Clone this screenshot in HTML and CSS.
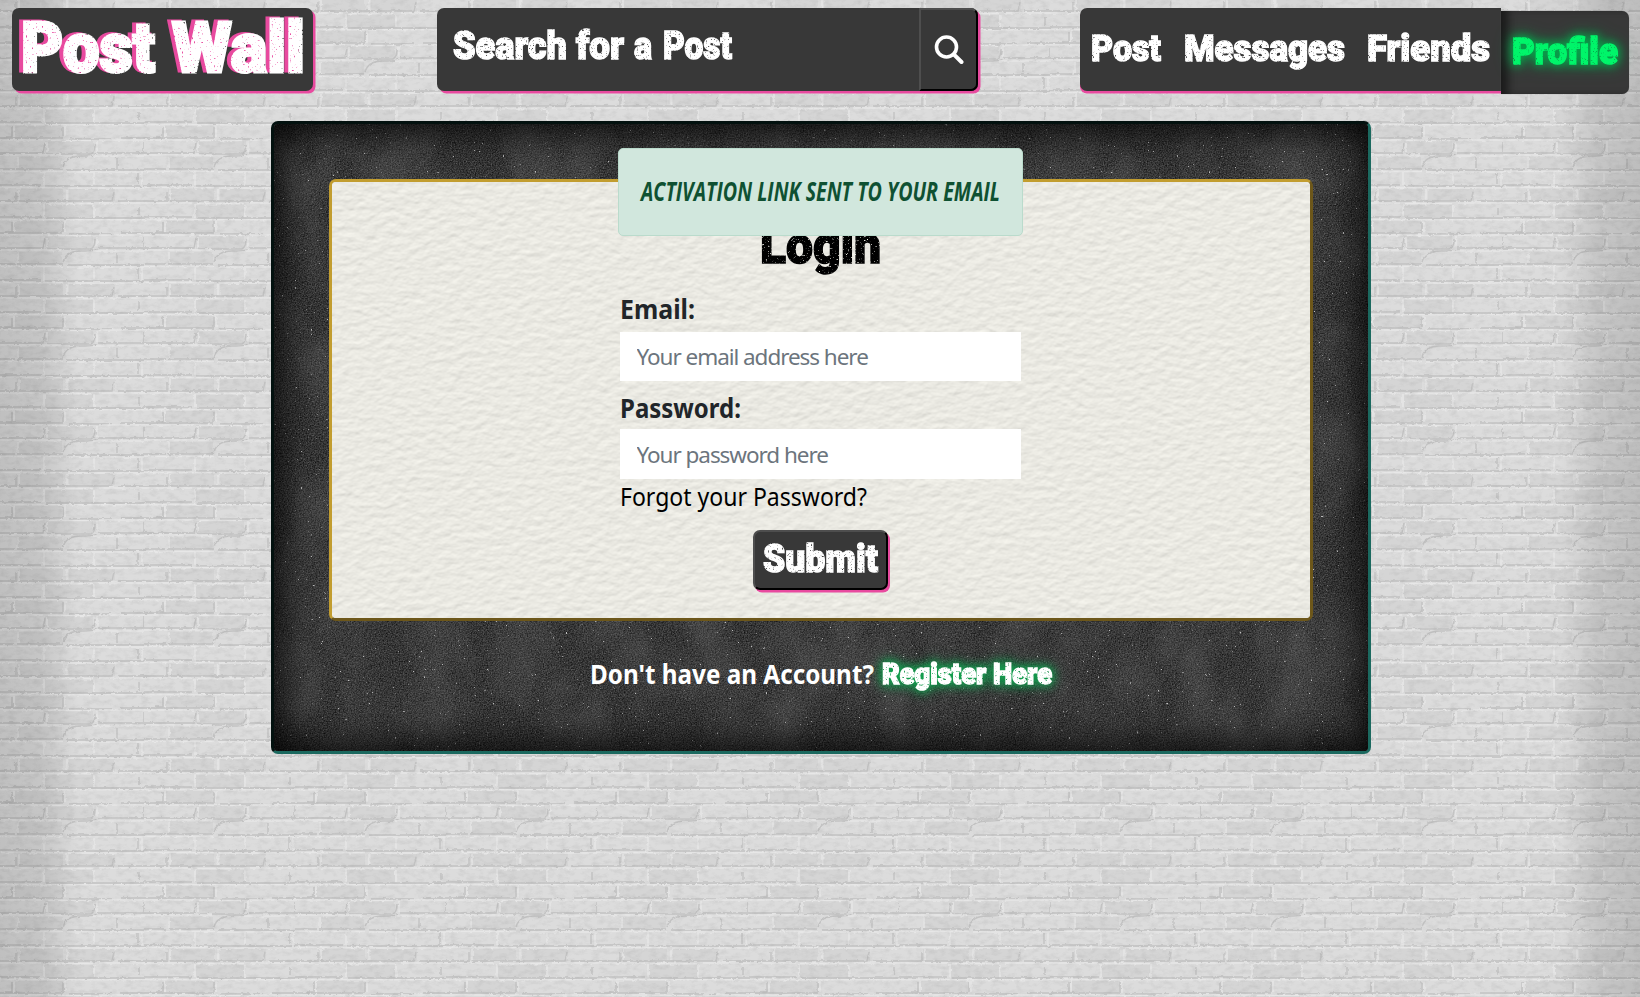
FILE: index.html
```html
<!DOCTYPE html>
<html lang="en">
<head>
<meta charset="utf-8">
<title>Post Wall</title>
<link rel="stylesheet" href="styles.css">
</head>
<body>
<svg class="wall" width="1640" height="997" aria-hidden="true">
  <defs>
    <filter id="worn" x="-5%" y="-20%" width="110%" height="140%" color-interpolation-filters="sRGB">
      <feTurbulence type="fractalNoise" baseFrequency=".55" numOctaves="3" seed="8"/>
      <feColorMatrix values="0 0 0 0 0  0 0 0 0 0  0 0 0 0 0  5 0 0 0 -3.2" result="n"/>
      <feComposite in="SourceGraphic" in2="n" operator="out"/>
    </filter>
    <filter id="wornPink" x="-5%" y="-20%" width="110%" height="140%" color-interpolation-filters="sRGB">
      <feTurbulence type="fractalNoise" baseFrequency=".5" numOctaves="3" seed="8"/>
      <feColorMatrix values="0 0 0 0 0  0 0 0 0 0  0 0 0 0 0  8 0 0 0 -5.3" result="n"/>
      <feComposite in="SourceGraphic" in2="n" operator="out" result="t"/>
      <feOffset in="SourceGraphic" dx="-4" dy="-1" result="o"/>
      <feFlood flood-color="#e84a9f"/>
      <feComposite in2="o" operator="in" result="p"/>
      <feMerge><feMergeNode in="p"/><feMergeNode in="t"/></feMerge>
    </filter>
    <filter id="rough" x="0" y="0" width="100%" height="100%" color-interpolation-filters="sRGB">
      <feTurbulence type="fractalNoise" baseFrequency=".25" numOctaves="3" seed="3" result="n"/>
      <feDisplacementMap in="SourceGraphic" in2="n" scale="3" xChannelSelector="R" yChannelSelector="G"/>
    </filter>
    <filter id="plaster" x="0" y="0" width="100%" height="100%" color-interpolation-filters="sRGB">
      <feTurbulence type="fractalNoise" baseFrequency=".12 .2" numOctaves="4" seed="5"/>
      <feColorMatrix values="0 0 0 0 .5  0 0 0 0 .5  0 0 0 0 .5  1 0 0 0 -.42"/>
    </filter>
    <filter id="chalk" x="0" y="0" width="100%" height="100%" color-interpolation-filters="sRGB">
      <feTurbulence type="fractalNoise" baseFrequency=".75" numOctaves="2" seed="2"/>
      <feColorMatrix values=".4 0 0 0 .01  .4 0 0 0 .01  .4 0 0 0 .01  0 0 0 0 1"/>
    </filter>
    <filter id="smudge" x="0" y="0" width="100%" height="100%" color-interpolation-filters="sRGB">
      <feTurbulence type="fractalNoise" baseFrequency=".022 .014" numOctaves="4" seed="12"/>
      <feColorMatrix values="0 0 0 0 .5  0 0 0 0 .5  0 0 0 0 .5  .5 0 0 0 -.17"/>
    </filter>
    <filter id="specks" x="0" y="0" width="100%" height="100%" color-interpolation-filters="sRGB">
      <feTurbulence type="fractalNoise" baseFrequency=".38" numOctaves="2" seed="21"/>
      <feColorMatrix values="0 0 0 0 .75  0 0 0 0 .75  0 0 0 0 .75  12 0 0 0 -9.1"/>
    </filter>
    <filter id="leather" x="0" y="0" width="100%" height="100%" color-interpolation-filters="sRGB">
      <feTurbulence type="fractalNoise" baseFrequency=".09 .15" numOctaves="3" seed="9"/>
      <feColorMatrix values="0 0 0 0 0  0 0 0 0 0  0 0 0 0 0  1 0 0 0 0"/>
      <feDiffuseLighting surfaceScale=".45" diffuseConstant="1.06" lighting-color="#eeede6">
        <feDistantLight azimuth="255" elevation="68"/>
      </feDiffuseLighting>
    </filter>
    <pattern id="bricks" width="151" height="95" patternUnits="userSpaceOnUse" patternTransform="translate(-7 29)">
      <rect width="151" height="95" fill="#dcdcdc"/>
      <g fill="#d5d5d5"><rect x="22" y="1" width="48" height="13"/><rect x="52" y="17" width="48" height="12"/><rect x="24" y="33" width="45" height="12"/><rect x="24" y="65" width="46" height="12"/><rect x="76" y="65" width="46" height="12"/><rect x="52" y="81" width="48" height="13"/></g>
      <g fill="none" stroke="#c3c3c3" stroke-width="1.4">
        <path d="M0 14H70M76 15H119M128 14H151M0 29H50L52 19M54 30H98Q102 28 102 20M105 29H151M0 45H22M24 45H70M74 46H151M0 61H48M52 62H151M0 77H24M26 77H119L121 68M125 77H151M0 93H48M53 94H151M19 3V13H12M70 3V13M70 43Q73 32 88 32T103 30M151 18V28M145 49V60M23 68V76M146 83V91M124 34V44"/>
      </g>
      <g fill="none" stroke="#e7e7e7" stroke-width="1.5">
        <path d="M0 .8H151M0 16H50M55 16.5H98M106 16H151M0 31H68M100 32H151M0 47.5H70M74 48H151M0 63.5H70M75 64H151M0 79H48M53 79.5H100M106 79H151M21 2V13M72 2V13M54 18V28M104 17V28M25 33V44M51 48V61M101 49V60M26 65V76M74 65V76M51 80V93M101 81V93M149 48V62"/>
      </g>
    </pattern>
    <linearGradient id="edges"><stop offset="0" stop-color="#000" stop-opacity=".13"/><stop offset=".025" stop-color="#000" stop-opacity=".1"/><stop offset=".048" stop-color="#000" stop-opacity="0"/><stop offset=".952" stop-color="#000" stop-opacity="0"/><stop offset=".975" stop-color="#000" stop-opacity=".1"/><stop offset="1" stop-color="#000" stop-opacity=".14"/></linearGradient>
  </defs>
  <rect x="-10" y="-10" width="1660" height="1017" fill="url(#bricks)" filter="url(#rough)"/>
  <rect width="1640" height="997" filter="url(#plaster)" opacity=".3"/>
  <rect width="1640" height="997" fill="url(#edges)"/>
</svg>

<header class="topbar">
  <a class="logo">
    <svg class="display pink" width="301" height="83"><text class="logo-text" y="64"><tspan x="9" textLength="134" lengthAdjust="spacingAndGlyphs">Post</tspan> <tspan x="160" textLength="133" lengthAdjust="spacingAndGlyphs">Wall</tspan></text></svg>
  </a>
  <form class="search">
    <svg class="display search-label" width="482" height="83"><text class="search-text" y="51"><tspan x="16" textLength="114" lengthAdjust="spacingAndGlyphs">Search</tspan> <tspan x="139" textLength="48" lengthAdjust="spacingAndGlyphs">for</tspan> <tspan x="197" textLength="18" lengthAdjust="spacingAndGlyphs">a</tspan> <tspan x="226" textLength="69" lengthAdjust="spacingAndGlyphs">Post</tspan></text></svg>
    <button class="search-button" type="button" aria-label="Search">
      <svg width="30" height="30" viewBox="0 0 30 30"><circle cx="12.5" cy="12" r="10" fill="none" stroke="#fff" stroke-width="3.6"/><path d="M19.8 19.3L27.5 27" stroke="#fff" stroke-width="4" stroke-linecap="round"/></svg>
    </button>
  </form>
  <nav class="menu">
    <a class="menu-item first"><svg class="display" width="93" height="83"><text class="menu-text" x="11" y="53" textLength="70" lengthAdjust="spacingAndGlyphs">Post</text></svg></a>
    <a class="menu-item"><svg class="display" width="183" height="83"><text class="menu-text" x="11" y="53" textLength="161" lengthAdjust="spacingAndGlyphs">Messages</text></svg></a>
    <a class="menu-item"><svg class="display" width="145" height="83"><text class="menu-text" x="11" y="53" textLength="123" lengthAdjust="spacingAndGlyphs">Friends</text></svg></a>
    <a class="menu-item active"><span class="glow"><svg class="display" width="128" height="83"><text class="menu-text" x="11" y="53" textLength="106" lengthAdjust="spacingAndGlyphs">Profile</text></svg></span></a>
  </nav>
</header>

<main class="board">
  <svg class="texture" aria-hidden="true"><rect width="100%" height="100%" filter="url(#chalk)"/><rect width="100%" height="100%" filter="url(#smudge)"/><rect width="100%" height="100%" filter="url(#specks)"/></svg>
  <div class="shade"></div>
  <section class="card">
    <svg class="texture" aria-hidden="true"><rect width="100%" height="100%" filter="url(#leather)"/></svg>
    <svg class="display login" width="124" height="64"><text class="login-text" x="1" y="45.5" textLength="121" lengthAdjust="spacingAndGlyphs">Login</text></svg>
    <form class="fields">
      <svg class="line" width="401" height="51"><text class="label-text" x="0" y="38" textLength="75" lengthAdjust="spacingAndGlyphs">Email:</text></svg>
      <input class="field" type="email" placeholder="Your email address here">
      <svg class="line" width="401" height="48"><text class="label-text" x="0" y="36.5" textLength="121" lengthAdjust="spacingAndGlyphs">Password:</text></svg>
      <input class="field tall" type="password" placeholder="Your password here">
      <svg class="line" width="401" height="51"><text class="forgot-text" x="0" y="27" textLength="247" lengthAdjust="spacingAndGlyphs">Forgot your Password?</text></svg>
      <button class="submit" type="button"><svg class="display" width="131" height="56"><text class="submit-text" x="8" y="39.5" textLength="115" lengthAdjust="spacingAndGlyphs">Submit</text></svg></button>
    </form>
  </section>
  <p class="signup">
    <svg class="line" width="286" height="40"><text class="account-text" x="-1" y="29" textLength="284" lengthAdjust="spacingAndGlyphs">Don't have an Account?</text></svg>
    <a class="register"><svg class="display" width="174" height="40"><text class="register-text" x="5" y="29" textLength="170" lengthAdjust="spacingAndGlyphs">Register Here</text></svg></a>
  </p>
  <div class="alert" role="alert">
    <svg class="line" width="364" height="40"><text class="alert-text" x="2" y="29" textLength="359" lengthAdjust="spacingAndGlyphs">ACTIVATION LINK SENT TO YOUR EMAIL</text></svg>
  </div>
</main>
</body>
</html>
```
FILE: styles.css
```css
* { box-sizing: border-box; }
html, body { height: 100%; }
body {
  margin: 0;
  overflow: hidden;
  background: #d8d8d8;
  font-family: "Noto Sans", sans-serif;
}
svg { display: block; flex: none; }
.wall { position: absolute; inset: 0; z-index: -1; }

.topbar { display: flex; height: 94px; padding: 8px 0 0 12px; }
.logo, .search, .menu-item { height: 83px; background: #383838; }
.logo { width: 301px; border-radius: 7px; box-shadow: 2.5px 2.5px 0 #e84a9f; }
.search { display: flex; width: 541px; margin: 0 0 0 124px; border-radius: 7px; box-shadow: 2.5px 2.5px 0 #e84a9f; }
.search-button {
  display: flex; align-items: center; justify-content: center;
  width: 59px; height: 83px; padding: 0;
  background: #383838;
  border: 2px solid; border-color: #4e4e4e #000 #000 #4e4e4e;
  border-radius: 0 7px 7px 0;
}
.menu { display: flex; margin-left: 102px; }
.menu-item { box-shadow: 0 2.5px 0 #e84a9f; }
.menu-item.first { border-radius: 7px 0 0 7px; }
.menu-item.active {
  margin-top: 3px;
  border-radius: 0 7px 7px 0;
  box-shadow: inset 10px 0 8px -3px #1b1b1b, 0 0 1px #777;
}

.display { overflow: visible; filter: url(#worn); }
.display.pink { filter: url(#wornPink); }
.display text { font-family: Roboto, sans-serif; font-weight: 900; fill: #fff; stroke: #fff; stroke-width: 1.5px; }
.display .logo-text { font-size: 70px; stroke-width: 3px; }
.display .search-text { font-size: 38px; }
.display .menu-text { font-size: 37px; }
.active .display .menu-text { fill: #00f56a; stroke: #00f56a; }
.glow { display: block; filter: drop-shadow(0 0 4px #06a94d) drop-shadow(0 0 7px #0a8f44); }

.board {
  position: relative;
  width: 1100px; height: 633px;
  margin: 27px 0 0 271px;
  padding: 55px;
  border: 3px solid; border-color: #03110f #1b695f #1b695f #03110f;
  border-radius: 7px;
  background: #333;
}
.texture, .shade { position: absolute; top: 0; left: 0; width: 100%; height: 100%; border-radius: 4px; }
.shade { box-shadow: inset 0 0 42px 4px #000; }
.card {
  position: relative;
  display: flex; flex-direction: column; align-items: center;
  width: 984px; height: 442px;
  padding-top: 35px;
  border: 3px solid; border-color: #c29d2f #6d571a #6d571a #c29d2f;
  border-radius: 7px;
  background: #ecebe4;
}
.login, .fields, .signup { position: relative; }
.display .login-text { font-size: 52px; fill: #000; stroke: #000; }
.fields { width: 401px; margin-right: 2px; }
.line { overflow: visible; }
.line text { font-family: "Noto Sans", sans-serif; }
.line .label-text { font-size: 27.5px; font-weight: 700; fill: #212529; }
.line .forgot-text { font-size: 25px; fill: #000; }
.field {
  display: block; width: 100%; height: 49px;
  padding: 0 17px; border: 0; border-radius: 0; background: #fff;
  font: 22.5px "Noto Sans", sans-serif; letter-spacing: -1.05px;
}
.field.tall { height: 50px; }
.field::placeholder { color: #6c757d; opacity: 1; }
.submit {
  display: block; width: 135px; height: 60px; margin: 0 0 0 133px; padding: 0;
  background: #383838;
  border: 2px solid; border-color: #4e4e4e #000 #000 #4e4e4e;
  border-radius: 7px; box-shadow: 2px 2.5px 0 #e84a9f;
}
.display .submit-text { font-size: 39px; }
.signup { display: flex; margin: 34px 0 0 262px; }
.line .account-text { font-size: 27px; font-weight: 700; fill: #fff; }
.display .register-text { font-size: 29.5px; }
.register { filter: drop-shadow(0 0 4px #12a850) drop-shadow(0 0 6px #128a48); }
.alert {
  position: absolute; top: 24px; left: 344px;
  display: flex; align-items: center; justify-content: center;
  width: 405px; height: 88px;
  background: #d1e7dd; border: 1px solid #badbcc; border-radius: 5px;
}
.line .alert-text { font-family: "Open Sans", sans-serif; font-size: 26px; font-weight: 700; font-style: italic; fill: #0f5132; }
```
